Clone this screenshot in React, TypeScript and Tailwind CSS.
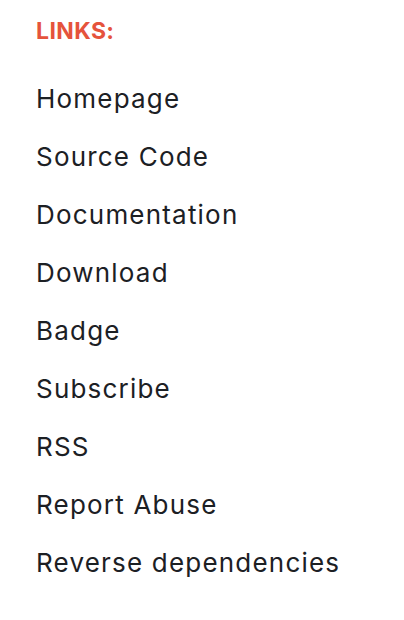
const links = [
  "Homepage",
  "Source Code",
  "Documentation",
  "Download",
  "Badge",
  "Subscribe",
  "RSS",
  "Report Abuse",
  "Reverse dependencies",
];

export default function App() {
  return (
    <div className="min-h-[620px] w-[404px] bg-white pl-9 pt-5 font-['Inter','Liberation_Sans',sans-serif]">
      <h2 className="text-[23px] font-bold leading-[23px] tracking-[0.4px] text-[#e5533c]">LINKS:</h2>
      <ul className="mt-[27px]">
        {links.map((l) => (
          <li key={l}>
            <a href="#" className="text-[26px] leading-[58px] tracking-[1.2px] text-[#1c2024]">
              {l}
            </a>
          </li>
        ))}
      </ul>
    </div>
  );
}
